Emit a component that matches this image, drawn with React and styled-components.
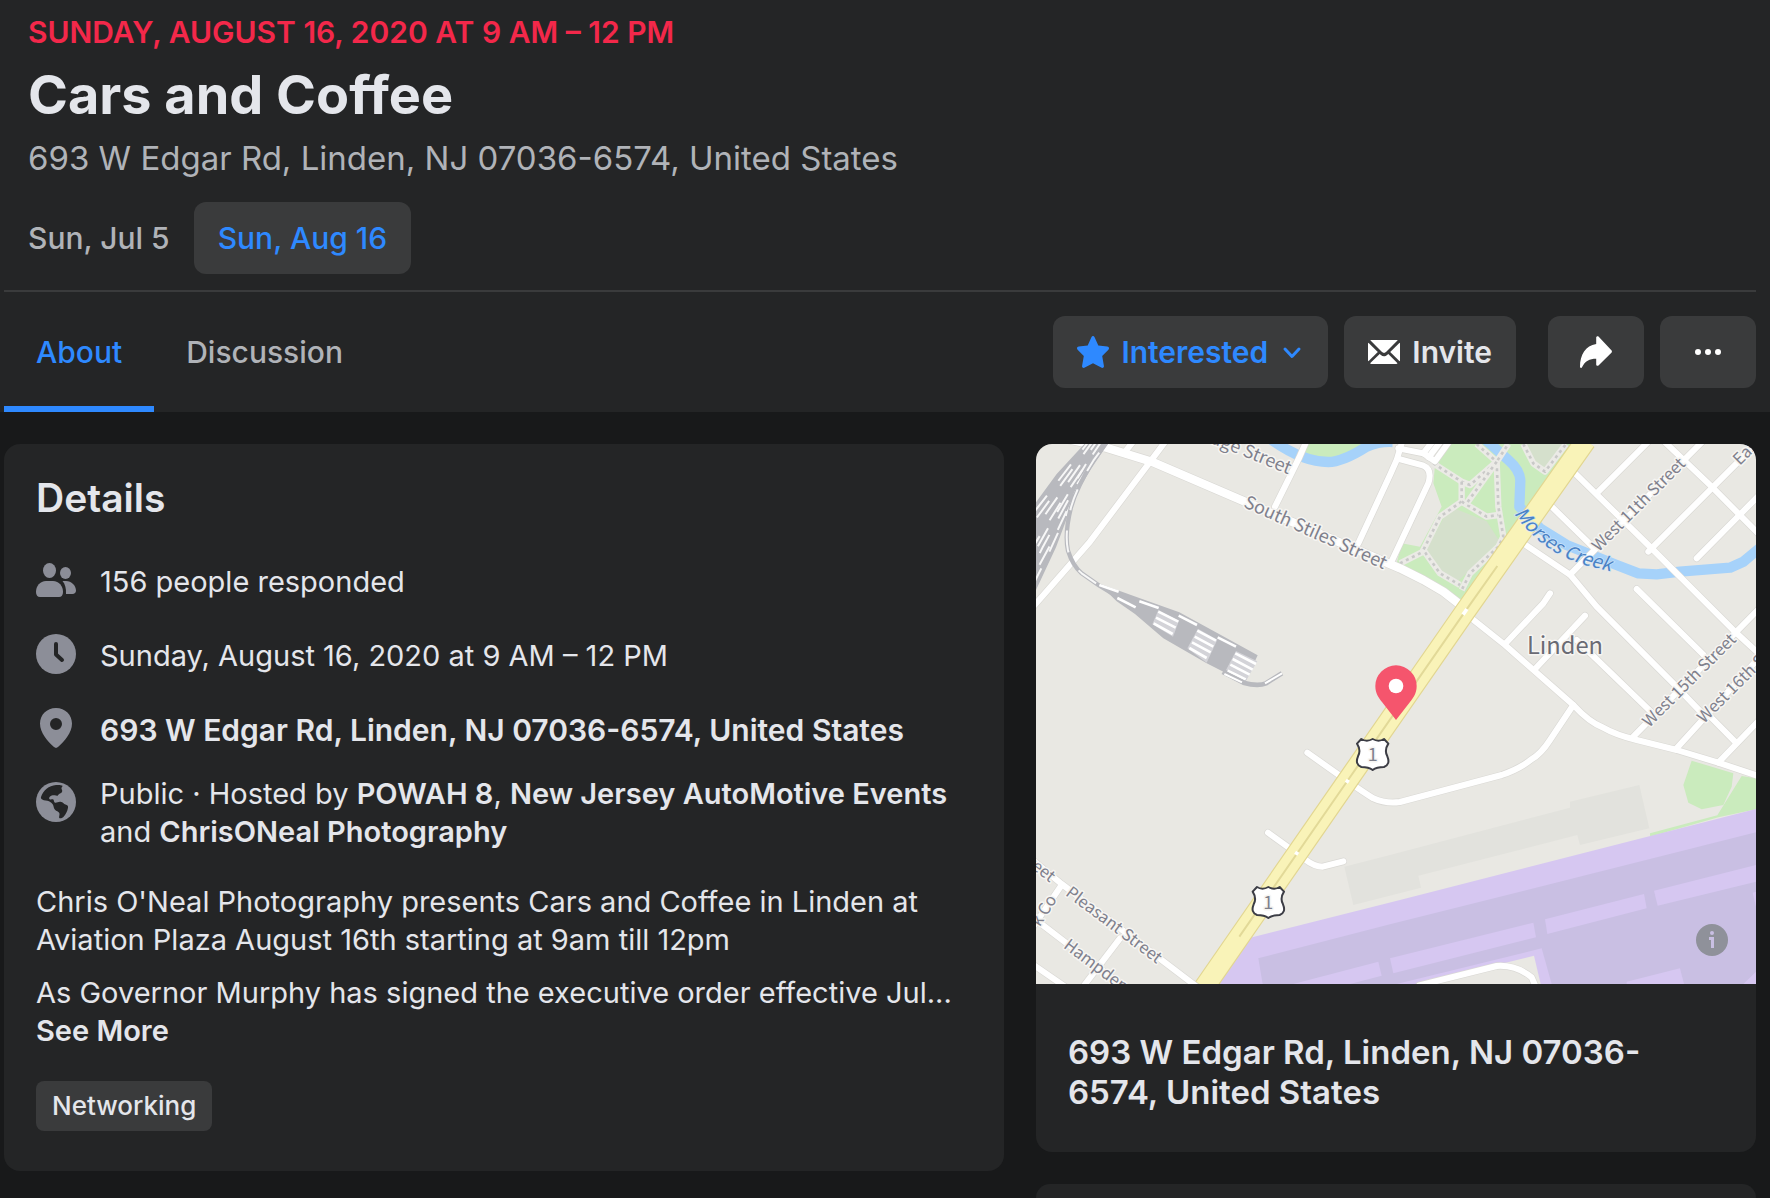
import React from 'react';
import styled, { createGlobalStyle, css } from 'styled-components';

const GlobalStyle = createGlobalStyle`
  * {
    box-sizing: border-box;
  }

  body {
    margin: 0;
    background: #18191a;
    color: #e4e6eb;
    font-family: Inter, "Liberation Sans", sans-serif;
    font-size: 29px;
    line-height: 38px;
  }

  h1, h2, p, ul {
    margin: 0;
    padding: 0;
  }

  a {
    color: inherit;
    text-decoration: none;
  }

  button {
    border: 0;
    padding: 0;
    background: none;
    color: inherit;
    font: inherit;
    cursor: pointer;
  }
`;

const Page = styled.div`
  display: flex;
  flex-direction: column;
  min-height: 100vh;
`;

const Header = styled.header`
  background: #242526;
  padding: 13px 14px 0 4px;
`;

const Intro = styled.div`
  padding: 0 24px 16px;
  border-bottom: 2px solid #3a3b3c;
`;

const EventDate = styled.p`
  color: #f3284a;
  font-size: 30px;
  font-weight: 600;
  text-transform: uppercase;
`;

const Title = styled.h1`
  margin-top: 12px;
  font-size: 54px;
  line-height: 64px;
  font-weight: 700;
`;

const Place = styled.p`
  margin-top: 11px;
  color: #b0b3b8;
  font-size: 33px;
  line-height: 40px;
`;

const Dates = styled.div`
  display: flex;
  gap: 24px;
  margin-top: 24px;
`;

const DateButton = styled.button`
  height: 72px;
  border-radius: 12px;
  color: #b0b3b8;
  font-size: 30px;
  font-weight: 500;
  ${props =>
    props.$active &&
    css`
      padding: 0 24px;
      background: #3a3b3c;
      color: #2e89ff;
    `}
`;

const Bar = styled.div`
  display: flex;
  justify-content: space-between;
  height: 120px;
`;

const Tabs = styled.nav`
  display: flex;
`;

const Tab = styled.a`
  display: flex;
  align-items: center;
  padding: 6px 32px 0;
  border-bottom: 6px solid transparent;
  color: #b0b3b8;
  font-size: 30px;
  font-weight: 500;
  ${props =>
    props.$active &&
    css`
      border-color: #2e89ff;
      color: #2e89ff;
    `}
`;

const Actions = styled.div`
  display: flex;
  align-items: center;
  gap: 32px;
`;

const ActionGroup = styled.div`
  display: flex;
  gap: 16px;
`;

const Action = styled.button`
  display: flex;
  align-items: center;
  justify-content: center;
  gap: 12px;
  height: 72px;
  min-width: 96px;
  padding: 0 24px;
  border-radius: 12px;
  background: #3a3b3c;
  color: ${props => (props.$active ? '#2e89ff' : '#e4e6eb')};
  font-size: 30px;
  font-weight: 600;
`;

const Columns = styled.main`
  display: grid;
  grid-template-columns: 25fr 18fr;
  gap: 32px;
  flex: 1;
  padding: 32px 14px 0 4px;
`;

const Card = styled.section`
  border-radius: 16px;
  background: #242526;
  overflow: hidden;
`;

const Details = styled(Card)`
  align-self: start;
  padding: 30px 32px 40px;
`;

const Heading = styled.h2`
  font-size: 39px;
  line-height: 48px;
  font-weight: 600;
`;

const Facts = styled.ul`
  display: flex;
  flex-direction: column;
  gap: 16px;
  margin-top: 31px;
  list-style: none;
`;

const Fact = styled.li`
  display: flex;
  align-items: flex-start;
  gap: 24px;

  svg {
    flex: none;
    margin-top: 7px;
  }
`;

const FactText = styled.div`
  display: flex;
  align-items: center;
  min-height: 58px;
`;

const Strong = styled.a`
  font-weight: 600;
`;

const Venue = styled(Strong)`
  font-size: 30px;
`;

const Description = styled.div`
  display: flex;
  flex-direction: column;
  gap: 15px;
  margin: 32px 0 31px;
`;

const SeeMore = styled.button`
  display: block;
  font-weight: 600;
`;

const Tag = styled.a`
  display: inline-flex;
  align-items: center;
  height: 50px;
  padding: 0 16px;
  border-radius: 8px;
  background: #3a3b3c;
  font-size: 26px;
  font-weight: 500;
  vertical-align: top;
`;

const Side = styled.div`
  display: flex;
  flex-direction: column;
  gap: 32px;
`;

const MapFrame = styled.div`
  position: relative;
  aspect-ratio: 4 / 3;
`;

const MapSvg = styled.svg`
  display: block;
  width: 100%;
  height: 100%;

  text {
    font-family: "Noto Sans CJK SC", "Noto Sans", sans-serif;
    stroke: #f6f5f2;
    stroke-width: 9px;
    stroke-linejoin: round;
    paint-order: stroke;
  }
`;

const StreetName = styled.text`
  font-size: ${props => (props.$major ? 54 : 49)}px;
  fill: #7f808c;
`;

const TownName = styled.text`
  font-size: 71px;
  fill: #6a6b74;
`;

const WaterName = styled.text`
  && {
    font-size: 56px;
    font-style: italic;
    fill: #4a82c4;
    stroke: #cfe4f8;
    stroke-width: 4px;
  }
`;

const InfoButton = styled.button`
  position: absolute;
  right: 28px;
  bottom: 28px;
  width: 32px;
  height: 32px;
  border-radius: 50%;
  background: #8f919a;

  svg {
    display: block;
  }
`;

const MapAddress = styled.p`
  padding: 48px 32px 40px;
  font-size: 33px;
  line-height: 40px;
  font-weight: 600;
`;

const NextCard = styled(Card)`
  flex: 1;
  border-radius: 16px 16px 0 0;
`;

/* icons */

const StarIcon = () =>
  <svg width="32" height="32" viewBox="0 0 32 32" fill="currentColor" aria-hidden="true">
    <path d="M14.4 1.2c.7-1.5 2.5-1.5 3.2 0l3.7 8.2 9 1c1.700.2 2.300 2.100 1.100 3.300l-6.200 6.200 1.700 9.900c.3 1.700-1.300 2.600-2.700 1.800L16 27.200l-8.200 4.400c-1.400.8-3-.1-2.700-1.800l1.700-9.900L.6 13.700c-1.200-1.200-.6-3.100 1.100-3.300l9-1z" />
  </svg>;

const ChevronIcon = () =>
  <svg width="24" height="24" viewBox="0 0 24 24" fill="none" stroke="currentColor" strokeWidth="3" strokeLinecap="round" strokeLinejoin="round" aria-hidden="true">
    <path d="M5 9l7 7.500 7-7.500" />
  </svg>;

const MailIcon = () =>
  <svg width="32" height="32" viewBox="0 0 32 32" fill="#fff" aria-hidden="true">
    <path d="M3.500 4h25c.5 0 .9.100 1.200.3L18 16.100c-1.100 1.100-2.900 1.100-4 0L2.300 4.300c.3-.2.700-.3 1.200-.3z" />
    <path d="M.4 6.700L9.800 16 .4 25.300C.1 25 0 24.500 0 24V8c0-.5.100-.9.400-1.300z" />
    <path d="M31.600 6.700L22.200 16l9.400 9.300c.3-.3.400-.8.400-1.300V8c0-.5-.1-.9-.4-1.300z" />
    <path d="M11.700 17.900l1.200 1.100c1.700 1.700 4.500 1.700 6.200 0l1.200-1.100 9.200 9.300c-.3.500-.7.800-1.200.8h-25c-.5 0-.9-.3-1.200-.8z" />
  </svg>;

const ShareIcon = () =>
  <svg width="32" height="32" viewBox="0 0 32 32" fill="#fff" aria-hidden="true">
    <path d="M16.200 1.600c0-1.300 1.400-1.900 2.300-1l12.900 13.700c.7.700.7 1.700 0 2.400L18.500 29.400c-.9.900-2.300.3-2.300-1v-5.700C9.500 22.700 5 25 2 31.300c-.6 1.200-2 .8-2-.5C0 18.800 5.500 9.500 16.200 8z" />
  </svg>;

const MoreIcon = () =>
  <svg width="32" height="32" viewBox="0 0 32 32" fill="#fff" aria-hidden="true">
    <circle cx="6" cy="16" r="3" />
    <circle cx="16" cy="16" r="3" />
    <circle cx="26" cy="16" r="3" />
  </svg>;

const PeopleIcon = () =>
  <svg width="40" height="40" viewBox="0 0 40 40" fill="#8c8e98" aria-hidden="true">
    <ellipse cx="13.500" cy="10.500" rx="6.500" ry="7.500" />
    <ellipse cx="29.500" cy="13" rx="5.500" ry="6" />
    <path d="M10 21h7c6 0 10 5 10 11 0 3-1.500 5-4 5H4c-2.500 0-4-2-4-5 0-6 4-11 10-11z" />
    <path d="M26.500 21H30c5.500 0 10 4.500 10 9.500 0 2.200-1.500 3.500-3.500 3.500H30c.3-5.500-.8-9.800-3.500-13z" />
  </svg>;

const ClockIcon = () =>
  <svg width="40" height="40" viewBox="0 0 40 40" aria-hidden="true">
    <circle cx="20" cy="20" r="20" fill="#8c8e98" />
    <path d="M20 10v10.500l6 5.500" fill="none" stroke="#242526" strokeWidth="4" strokeLinecap="round" strokeLinejoin="round" />
  </svg>;

const PinIcon = () =>
  <svg width="40" height="40" viewBox="0 0 40 40" fill="#8c8e98" aria-hidden="true">
    <path fillRule="evenodd" d="M20 0c9.300 0 16 7 16 15.500 0 9.500-7.500 17.500-14 23.600-1.200 1.100-2.800 1.100-4 0C11.500 33 4 25 4 15.500 4 7 10.700 0 20 0zm0 10a6 6 0 100 12 6 6 0 000-12z" />
  </svg>;

const GlobeIcon = () =>
  <svg width="40" height="40" viewBox="0 0 40 40" aria-hidden="true">
    <circle cx="20" cy="20" r="20" fill="#8c8e98" />
    <path fill="#242526" d="M5 15C7 8.500 13 3.500 20 3c2.500-.3 5.500 0 6.500.8.5.9-1.500 1.400-1 2.900.3 1.100 1.200 1.900.5 3.300-.9 1.700-3.200 1.500-4 3.200-.4 1-2 .3-3.200.1-1.600-.2-3.500 0-5 1.400-.9.900-1 2.300.3 2.700 1.300.4 2.600-.7 3.400.3.600.9.400 2.500 1.600 3 1.800.3 3.300-1.200 5.400-.9 2.800.5 3 2.200 5 2.700 1.600.5 3 1 2.500 3.300-.7 3.600-2.200 6.900-4.600 9.100-1.100.9-2.400 1.500-3.700 1.300-1.400-.7.400-3.700-.4-5.300-.9-1.500-2.900-1.500-4.300-3.100-1.500-1.600-1.200-3.300-2-5-.7-1.600-2.400-2.600-4-3.500-1.900-1.100-4.900-.6-6.700-1.900C5 16.800 4.700 16 5 15z" />
  </svg>;

/* the map, drawn on a 2160 x 1620 grid */

const avenues = [
  'M-20-40L207 10 347 53 1092 373 1162 408 1222 443 1275 484',
];

const streets = [
  'M390-10L162 293-10 490',
  'M270 20L292-8',
  'M811-8L790 40 717 188',
  'M1099-8L1082 48 1062 93 967 298',
  'M1067 352L1177 118Q1190 76 1160 64L1085 44',
  'M1087 13L1162 28 1197 52 1240-8',
  'M1162 28L1190-8M1178 40L1214-8',
  'M1300 518L1407 603 1612 783Q1660 835 1700 850 1740 873 1802 888L1922 918 2047 956 2170 997',
  'M1612 783L1542 888Q1515 930 1485 947 1450 975 1397 993L1092 1074Q1050 1080 1012 1063 990 1050 934 1011L814 926',
  'M696 1166L807 1246Q835 1268 860 1268L922 1252',
  'M1612 83L1852 318 2102 568 2170 630',
  'M1542 183L1672 310',
  'M1450 290L1602 392 1682 488 1912 718 2010 820',
  'M1602 392L2000-8',
  'M1687 143L1840-10',
  'M1880-12L2027 128 2170 272',
  'M1837 323L2170-10',
  'M1982 343L2170 153',
  'M1802 435L2002 632',
  'M1542 448L1522 478 1407 600',
  'M1647 515L1497 675',
  'M1622 588L1850 808',
  'M2170 493L1792 878',
  'M2170 640L1922 913',
  'M2170 828L2047 956',
  'M2015 810L2097 893',
  'M-20 1240L77 1320 490 1634',
  'M-10 1420L92 1498 280 1640',
  'M-10 1561L90 1630',
  'M252 1483L140 1630',
  'M77 1323L-10 1450',
  'M1150 1624L1382 1566Q1440 1562 1487 1600L1500 1630',
];

const footpaths = [
  'M1322 0L1382 53 1387 188 1402 278 1387 308 1302 388 1277 438',
  'M1192 58L1277 113 1302 123 1382 53 1417 0',
  'M1277 113L1277 173 1212 218 1162 318 1212 388 1272 423',
  'M1277 173L1352 218 1387 213',
  'M1382 53L1292 178',
  'M1462 0L1492 58 1527 83 1590 0',
  'M1092 358L1162 323',
];

const tracks = [
  'M160-10L-10 210',
  'M172-10L-10 238',
  'M184-10L-10 265',
  'M198-10L90 150-10 310',
  'M210-5L120 125 20 310-10 370',
  'M150 60L60 210-10 335',
  'M130 120L50 290-10 400',
  'M110 170L30 345-10 425',
];

const yardStripes = [
  'M190 423l58 20M244 462l55 28M310 472l58 20',
  'M367 503l60 30M360 521l59 30M353 538l57 32',
  'M428 515l55 28M484 560l56 30M476 578l56 30M468 595l56 30M460 612l52 30',
  'M545 580l55 28M598 628l62 32M590 645l60 32M583 662l58 30M575 680l54 26',
];

const highway = 'M1649-10L1287 503 934 1011 505 1630';

const Shield = ({ x, y }) =>
  <g transform={`translate(${x} ${y})`}>
    <path
      d="M-34-46Q-18-36 0-46 18-36 34-46L47-32Q34-12 44 6 54 30 34 38 12 38 0 47-12 38-34 38-54 30-44 6-34-12-47-32z"
      fill="#fff"
      stroke="#3c3d45"
      strokeWidth="6"
      strokeLinejoin="round"
    />
    <StreetName $major y="19" textAnchor="middle">1</StreetName>
  </g>;

const Label = ({ x, y, turn, major, end, children }) =>
  <StreetName
    $major={major}
    transform={`translate(${x} ${y}) rotate(${turn})`}
    textAnchor={end ? 'end' : 'start'}
  >
    {children}
  </StreetName>;

const EventMap = () =>
  <MapSvg viewBox="0 0 2160 1620" preserveAspectRatio="xMidYMid slice" role="img" aria-label="Map of Linden">
    <rect width="2160" height="1620" fill="#e9e8e3" />

    <g fill="#caebbd">
      <path d="M815 0L802 25 870 50 940 35 990 0z" />
      <path d="M1227 0H1630L1280 470 1202 418 1082 358 1097 298 1152 308 1217 188 1192 118 1197 63z" />
      <path d="M1967 950L2092 988 2087 1028 2062 1083 1997 1096 1957 1076 1942 1023z" />
      <path d="M2117 996L2160 1003V1096L2047 1120 1842 1178 1842 1168 2044 1114z" />
    </g>
    <path d="M1242 188L1352 232 1390 290 1300 380 1262 415 1200 370 1170 318z" fill="#d5e0cc" />
    <path d="M1470 0L1500 60 1527 78 1580 0z" fill="#d5e0cc" />

    <g fill="none" stroke="#a6d2fa" strokeWidth="31" strokeLinejoin="round">
      <path d="M705-14Q800 54 877 54 920 54 992 8 1030-8 1070-6" />
      <path d="M1350-12L1417 48Q1452 78 1453 110L1450 188 1512 253 1592 303 1742 363 1807 388 1862 391 1932 383 2082 371 2122 353 2170 313" />
    </g>

    {footpaths.map(d =>
      <g key={d} fill="none" strokeLinejoin="round">
        <path d={d} stroke="#ebeae6" strokeWidth="19" />
        <path d={d} stroke="#c9c9c8" strokeWidth="8" strokeDasharray="9 11" />
      </g>
    )}

    <path d="M925 1268L1062 1233 1602 1091 1602 1073 1810 1023 1840 1153 1632 1203 1624 1173 1147 1295 1155 1331 952 1383z" fill="#e2e2dd" />

    <path d="M637 1483L1092 1368 2160 1095V1620H540z" fill="#d6c7f1" />
    <path d="M667 1543L1062 1441 2160 1165V1620H680z" fill="#c9bfe3" />
    <g fill="#d6c7f1">
      <path d="M1527 1426L1824 1350 1832 1393 1534 1470z" />
      <path d="M1854 1340L2160 1263V1313L1865 1385z" />
      <path d="M1062 1543L1492 1436 1500 1480 1072 1588z" />
      <path d="M772 1620L1027 1553 1037 1595 942 1620z" />
      <path d="M1082 1620L1517 1513 1547 1620z" />
      <path d="M1772 1613L1932 1573 1944 1620H1772z" />
      <path d="M2122 1620L2160 1583V1620zM2150 1346L2160 1343V1388z" />
    </g>
    <path d="M1150 1620L1494 1535 1514 1620z" fill="#e9e8e3" />

    <g fill="none" strokeLinecap="round" strokeLinejoin="round">
      {streets.map(d => <path key={d} d={d} stroke="#dad9d5" strokeWidth="22" />)}
      {avenues.map(d => <path key={d} d={d} stroke="#dad9d5" strokeWidth="29" />)}
      {streets.map(d => <path key={d} d={d} stroke="#fff" strokeWidth="18" />)}
      {avenues.map(d => <path key={d} d={d} stroke="#fff" strokeWidth="25" />)}
    </g>

    <path d="M145 0H215L165 75 120 150 60 310 0 438V175L62 90z" fill="#b8b9be" />
    <g fill="none" stroke="#f7f7f7" strokeWidth="6" strokeDasharray="62 56">
      {tracks.map((d, i) => <path key={d} d={d} strokeDashoffset={i % 2 ? 12 : 28} />)}
    </g>
    <g fill="none">
      <path d="M212-5L172 50Q122 130 105 190 85 270 96 320 110 365 137 388L187 423 248 460" stroke="#b8b9be" strokeWidth="13" />
      <path d="M212-5L172 50Q122 130 105 190 85 270 96 320 110 365 137 388L187 423" stroke="#f7f7f7" strokeWidth="6" strokeDasharray="66 62" strokeDashoffset="90" />
    </g>

    <path d="M187 418L312 463 430 505 545 568 665 634 627 716 512 658 382 583 297 510 242 472z" fill="#b8b9be" />
    <path d="M367 498L429 530 411 578 349 541zM486 554L544 587 512 656 454 613zM600 621L664 652 630 710 570 678z" fill="#d3d3d8" />
    <g fill="none" stroke="#fff" strokeWidth="8">
      {yardStripes.map(d => <path key={d} d={d} />)}
    </g>
    <path d="M560 684L622 716Q665 728 690 718L738 688" fill="none" stroke="#b8b9be" strokeWidth="14" />
    <path d="M565 690L618 715M687 718L738 688" fill="none" stroke="#fff" strokeWidth="6" />

    <g fill="none">
      <path d={highway} stroke="#e2d691" strokeWidth="65" />
      <path d={highway} stroke="#f9f3b8" strokeWidth="58" />
      <path d="M1384 366L1287 503 934 1011 610 1478" stroke="#e2d998" strokeWidth="6" />
      <path d="M1281 512l12-17M931 1016l6-9M779 1232l6-9" stroke="#fff" strokeWidth="11" />
    </g>

    <Label x={757} y={91} turn={22} major end>age Street</Label>
    <Label x={620} y={188} turn={24} major>South Stiles Street</Label>
    <Label x={1688} y={325} turn={-45}>West 11th Street</Label>
    <Label x={1840} y={852} turn={-45}>West 15th Street</Label>
    <Label x={2004} y={840} turn={-45}>West 16th Street</Label>
    <Label x={2111} y={66} turn={-45}>East</Label>
    <Label x={86} y={1352} turn={37}>Pleasant Street</Label>
    <Label x={80} y={1510} turn={37}>Hampden Street</Label>
    <Label x={42} y={1316} turn={37} end>Street</Label>
    <Label x={64} y={1366} turn={-58} end>k Co</Label>

    <path id="creek" d="M1434 208Q1500 302 1600 346 1680 378 1790 392" fill="none" />
    <WaterName>
      <textPath href="#creek">Morses Creek</textPath>
    </WaterName>
    <TownName x="1473" y="629">Linden</TownName>

    <Shield x={1010} y={931} />
    <Shield x={697} y={1375} />

    <path d="M1080 664a62 62 0 0162 62c0 22-10 36-20 48l-42 54-42-54c-10-12-20-26-20-48a62 62 0 0162-62z" fill="#f5556d" />
    <circle cx="1080" cy="726" r="22" fill="#fff" />
  </MapSvg>;

const facts = [
  { icon: PeopleIcon, text: '156 people responded' },
  { icon: ClockIcon, text: 'Sunday, August 16, 2020 at 9 AM – 12 PM' },
  { icon: PinIcon, text: <Venue href="#map">693 W Edgar Rd, Linden, NJ 07036-6574, United States</Venue> },
  {
    icon: GlobeIcon,
    text:
      <span>
        Public · Hosted by <Strong href="#powah">POWAH 8</Strong>, <Strong href="#njame">New Jersey AutoMotive Events</Strong>{' '}
        and <Strong href="#chris">ChrisONeal Photography</Strong>
      </span>,
  },
];

const App = () =>
  <Page>
    <GlobalStyle />
    <Header>
      <Intro>
        <EventDate>Sunday, August 16, 2020 at 9 AM – 12 PM</EventDate>
        <Title>Cars and Coffee</Title>
        <Place>693 W Edgar Rd, Linden, NJ 07036-6574, United States</Place>
        <Dates>
          <DateButton type="button">Sun, Jul 5</DateButton>
          <DateButton type="button" $active>Sun, Aug 16</DateButton>
        </Dates>
      </Intro>
      <Bar>
        <Tabs>
          <Tab href="#about" $active>About</Tab>
          <Tab href="#discussion">Discussion</Tab>
        </Tabs>
        <Actions>
          <ActionGroup>
            <Action type="button" $active>
              <StarIcon />
              Interested
              <ChevronIcon />
            </Action>
            <Action type="button">
              <MailIcon />
              Invite
            </Action>
          </ActionGroup>
          <ActionGroup>
            <Action type="button" aria-label="Share"><ShareIcon /></Action>
            <Action type="button" aria-label="More"><MoreIcon /></Action>
          </ActionGroup>
        </Actions>
      </Bar>
    </Header>

    <Columns>
      <Details id="about">
        <Heading>Details</Heading>
        <Facts>
          {facts.map(({ icon: Icon, text }, i) =>
            <Fact key={i}>
              <Icon />
              <FactText>{text}</FactText>
            </Fact>
          )}
        </Facts>
        <Description>
          <p>Chris O'Neal Photography presents Cars and Coffee in Linden at Aviation Plaza August 16th starting at 9am till 12pm</p>
          <div>
            <p>As Governor Murphy has signed the executive order effective Jul...</p>
            <SeeMore type="button">See More</SeeMore>
          </div>
        </Description>
        <Tag href="#networking">Networking</Tag>
      </Details>

      <Side>
        <Card id="map">
          <MapFrame>
            <EventMap />
            <InfoButton type="button" aria-label="Map information">
              <svg width="32" height="32" viewBox="0 0 32 32" fill="#c9bfe3" aria-hidden="true">
                <circle cx="16" cy="9" r="2" />
                <path d="M13 13h5v11h-3v-8h-2z" />
              </svg>
            </InfoButton>
          </MapFrame>
          <MapAddress>693 W Edgar Rd, Linden, NJ 07036-6574, United States</MapAddress>
        </Card>
        <NextCard />
      </Side>
    </Columns>
  </Page>;

export default App;
